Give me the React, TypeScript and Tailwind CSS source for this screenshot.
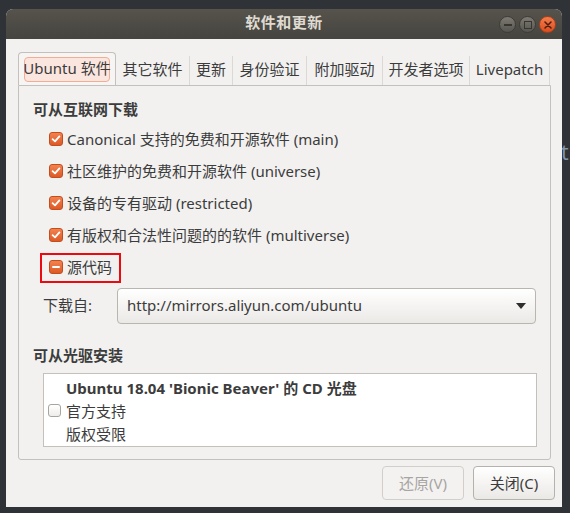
import React from 'react'

const font = "font-['Noto_Sans','Noto_Sans_CJK_SC',sans-serif]"

const Check = ({ state }: { state: 'on' | 'off' | 'mixed' }) => {
    if (state === 'off') {
        return <span className="block w-[13px] h-[13px] rounded-[3px] border border-[#a8a5a0] bg-gradient-to-b from-white to-[#eeedeb]" />
    }
    return (
        <span className="flex items-center justify-center w-[14px] h-[14px] rounded-[3px] border border-[#c24e1e] bg-gradient-to-b from-[#f2824f] to-[#dd5a24]">
            {state === 'on' ? (
                <svg width="10" height="10" viewBox="0 0 10 10">
                    <path d="M1.6 5.2 L4 7.4 L8.4 2.4" fill="none" stroke="white" strokeWidth="1.8" strokeLinecap="round" strokeLinejoin="round" />
                </svg>
            ) : (
                <span className="block w-[8px] h-[2px] bg-white rounded-sm" />
            )}
        </span>
    )
}

const tabs = [
    { label: '其它软件', w: 'w-[74px]' },
    { label: '更新', w: 'w-[43px]' },
    { label: '身份验证', w: 'w-[74px]' },
    { label: '附加驱动', w: 'w-[76px]' },
    { label: '开发者选项', w: 'w-[87px]' },
    { label: 'Livepatch', w: 'w-[80px]' },
]

const sources = [
    { label: 'Canonical 支持的免费和开源软件 (main)', state: 'on' as const },
    { label: '社区维护的免费和开源软件 (universe)', state: 'on' as const },
    { label: '设备的专有驱动 (restricted)', state: 'on' as const },
    { label: '有版权和合法性问题的的软件 (multiverse)', state: 'on' as const },
]

export default function App() {
    return (
        <div className={`relative w-[570px] h-[513px] overflow-hidden bg-[#2f3237] pt-[9px] pl-[6px] ${font} text-[15px] text-[#3c3c3c]`}>
            {/* desktop text peeking out behind the window */}
            <span className="absolute left-[561px] top-[137px] text-[21px] text-[#8094ab]">t</span>

            <div className="relative w-[556px] h-[498px] flex flex-col rounded-t-[7px] overflow-hidden bg-[#f2f1f0]">
                {/* title bar */}
                <div className="relative h-[30px] shrink-0 flex items-center justify-center pb-[3px] bg-gradient-to-b from-[#56534c] to-[#46443f]">
                    <span className="font-bold text-[15px] text-[#dfdbd2] tracking-[0.5px]">软件和更新</span>
                    <div className="absolute right-[6px] top-[7px] flex gap-[3px]">
                        <span className="flex items-center justify-center w-[17px] h-[17px] rounded-full border border-[#3e3c38] bg-gradient-to-b from-[#7d7a73] to-[#57554f]">
                            <span className="block w-[8px] h-[2px] bg-[#36352f]" />
                        </span>
                        <span className="flex items-center justify-center w-[17px] h-[17px] rounded-full border border-[#3e3c38] bg-gradient-to-b from-[#7d7a73] to-[#57554f]">
                            <span className="block w-[8px] h-[8px] border-[1.5px] border-[#36352f]" />
                        </span>
                        <span className="flex items-center justify-center w-[17px] h-[17px] rounded-full border border-[#a8401a] bg-gradient-to-b from-[#f47c4c] to-[#dc4d1c]">
                            <svg width="8" height="8" viewBox="0 0 8 8">
                                <path d="M1 1 L7 7 M7 1 L1 7" stroke="#4a1e0c" strokeWidth="1.5" strokeLinecap="round" />
                            </svg>
                        </span>
                    </div>
                </div>

                <div className="flex flex-col pl-[12px] pr-[7px] pt-[13px]">
                    {/* tabs */}
                    <div className="flex items-end h-[33px]">
                        <div className="w-[98px] h-[33px] flex items-center justify-center rounded-t-[4px] border border-b-0 border-[#c4c1bc] bg-[#f6f5f4]">
                            <span className="flex items-center justify-center w-[86px] h-[25px] pb-[2px] whitespace-nowrap rounded-[4px] border border-[#f2ad95] bg-[#fbe6df]">Ubuntu 软件</span>
                        </div>
                        {tabs.map((t) => (
                            <div key={t.label} className={`${t.w} h-[29px] pb-[3px] flex items-center justify-center whitespace-nowrap border-r border-[#dcd9d5]`}>
                                {t.label}
                            </div>
                        ))}
                    </div>

                    {/* notebook page */}
                    <div className="w-[533px] h-[375px] flex flex-col border border-[#c4c1bc] rounded-b-[3px] pl-[14px] pt-[13px]">
                        <div className="h-[20px] flex items-center font-bold">可从互联网下载</div>
                        <div className="flex flex-col mt-[4px]">
                            {sources.map((s) => (
                                <div key={s.label} className="h-[32px] flex items-center gap-[4px] pl-[16px]">
                                    <Check state={s.state} />
                                    <span className="whitespace-nowrap">{s.label}</span>
                                </div>
                            ))}
                            <div className="relative h-[32px] flex items-center gap-[4px] pl-[16px]">
                                <Check state="mixed" />
                                <span>源代码</span>
                                <span className="absolute left-[7px] top-[2px] w-[81px] h-[30px] border-2 border-[#ea0a0f]" />
                            </div>
                        </div>

                        <div className="flex items-center mt-[5px] h-[36px]">
                            <span className="w-[84px] pl-[10px] pb-[2px]">下载自:</span>
                            <div className="w-[419px] h-[36px] flex items-center justify-between pl-[9px] pr-[9px] rounded-[4px] border border-[#b9b5af] bg-gradient-to-b from-white to-[#ebe9e6]">
                                <span className="pb-[2px]">http://mirrors.aliyun.com/ubuntu</span>
                                <svg width="10" height="6" viewBox="0 0 10 6">
                                    <path d="M0 0 L10 0 L5 6 Z" fill="#2e2e2e" />
                                </svg>
                            </div>
                        </div>

                        <div className="h-[20px] flex items-center font-bold mt-[21px]">可从光驱安装</div>

                        <div className="ml-[10px] mt-[8px] w-[494px] h-[74px] flex items-center bg-white border border-[#c4c1bc]">
                            <span className="pl-[4px]">
                                <Check state="off" />
                            </span>
                            <div className="flex flex-col ml-[5px] pt-[2px] leading-[23px]">
                                <span className="font-bold">Ubuntu 18.04 'Bionic Beaver' 的 CD 光盘</span>
                                <span>官方支持</span>
                                <span>版权受限</span>
                            </div>
                        </div>
                    </div>

                    {/* dialog buttons */}
                    <div className="flex justify-end gap-[9px] mt-[6px]">
                        <span className="w-[82px] h-[34px] flex items-center justify-center rounded-[4px] border border-[#d2cfcb] bg-[#f3f2f1] text-[#a7a5a1]">还原(V)</span>
                        <span className="w-[82px] h-[34px] flex items-center justify-center rounded-[4px] border border-[#b5b1ab] bg-gradient-to-b from-white to-[#ebe9e6]">关闭(C)</span>
                    </div>
                </div>
            </div>
        </div>
    )
}
